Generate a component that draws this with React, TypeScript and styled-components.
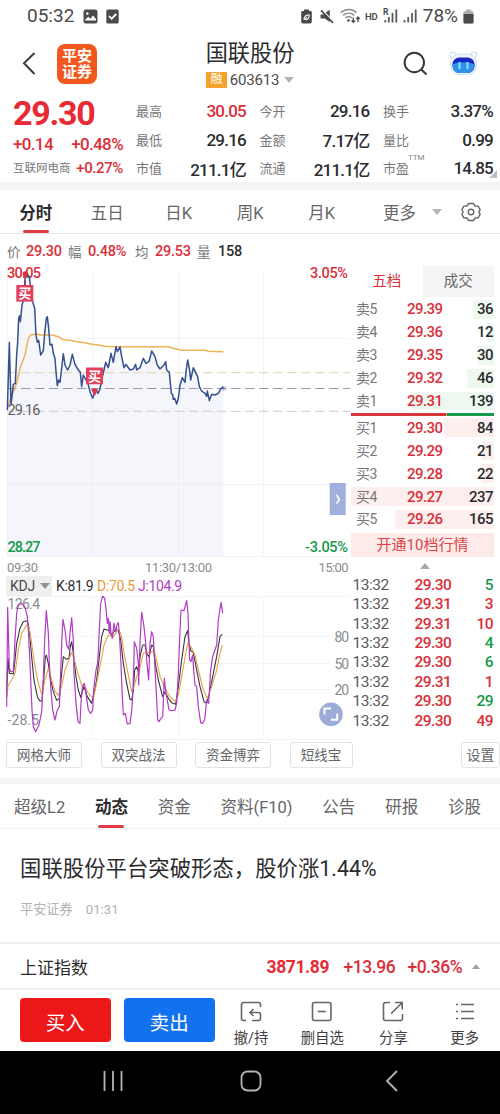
import React from "react";
import styled, { createGlobalStyle } from "styled-components";

const RED = "#d9303a";
const GREEN = "#149a4b";
const INK = "#2c2c2f";
const GREY = "#77777a";

const GlobalStyle = createGlobalStyle`
  * { box-sizing: border-box; }
  body {
    margin: 0;
    background: #fff;
    color: ${INK};
    font-family: Roboto, "Noto Sans CJK SC", sans-serif;
    -webkit-font-smoothing: antialiased;
  }
`;

const Page = styled.main`
  width: 500px;
  height: 1114px;
  overflow: hidden;
  display: flex;
  flex-direction: column;
  background: #fff;
`;

/* ---------- status bar ---------- */

const StatusBar = styled.div`
  height: 32px;
  flex: none;
  display: flex;
  align-items: center;
  padding-left: 27px;
  color: #4a4a4a;
`;
const StatusText = styled.span<{ $w: number }>`
  width: ${(p) => p.$w}px;
  font-size: 19px;
  line-height: 32px;
  white-space: nowrap;
`;
const StatusIcon = styled.svg<{ $gap: number }>`
  flex: none;
  margin-left: ${(p) => p.$gap}px;
`;
const Hd = styled.span`
  width: 13px;
  margin-left: 4px;
  font-size: 9.5px;
  font-weight: 600;
  letter-spacing: -0.2px;
`;

/* ---------- header ---------- */

const Header = styled.header`
  height: 63px;
  flex: none;
  display: grid;
  grid-template-columns: 57px 120px 146px 79px 47px 1fr;
  align-items: center;
`;
const BackIcon = styled.svg`
  margin-left: 22px;
`;
const Brand = styled.div`
  width: 40px;
  height: 40px;
  border-radius: 8px;
  background: #f2571d;
  color: #fff;
  font-size: 15px;
  font-weight: 700;
  line-height: 16px;
  text-align: center;
  padding-top: 4px;
`;
const TitleBlock = styled.div`
  display: flex;
  flex-direction: column;
  align-items: center;
  padding-top: 2px;
`;
const Title = styled.h1`
  margin: 0;
  font-size: 22.2px;
  font-weight: 400;
  line-height: 30px;
  height: 31px;
`;
const Code = styled.div`
  display: flex;
  align-items: center;
  font-size: 15px;
  line-height: 18px;
  height: 22px;
  letter-spacing: -0.2px;
  color: #4c4c50;
`;
const MarginTag = styled.span`
  width: 21px;
  height: 16px;
  margin-right: 3px;
  background: #f5a32c;
  color: #fff;
  font-size: 12px;
  line-height: 15px;
  text-align: center;
`;
const Caret = styled.i<{ $up?: boolean; $size?: number; $ml?: number; $color?: string }>`
  width: 0;
  height: 0;
  flex: none;
  margin-left: ${(p) => p.$ml ?? 0}px;
  border-left: ${(p) => p.$size ?? 5}px solid transparent;
  border-right: ${(p) => p.$size ?? 5}px solid transparent;
  border-${(p) => (p.$up ? "bottom" : "top")}: ${(p) => (p.$size ?? 5) + 1}px solid ${(p) => p.$color ?? "#b4b4b6"};
`;

/* ---------- quote ---------- */

const Quote = styled.section`
  height: 87px;
  flex: none;
  display: flex;
  padding: 1px 0 0 13px;
`;
const QuoteMain = styled.div`
  width: 123px;
  color: ${RED};
`;
const BigPrice = styled.div`
  font-size: 34px;
  font-weight: 700;
  line-height: 34px;
  height: 34px;
  letter-spacing: -1.3px;
  color: #e72a33;
`;
const ChangeLine = styled.div`
  display: flex;
  justify-content: space-between;
  width: 110px;
  height: 27px;
  font-size: 17px;
  line-height: 28px;
  font-weight: 500;
  letter-spacing: -0.65px;
`;
const SectorLine = styled.div`
  display: flex;
  justify-content: space-between;
  width: 110px;
  height: 23px;
  line-height: 23px;
  font-size: 15px;
  font-weight: 500;
  letter-spacing: -0.4px;
`;
const Sector = styled.span`
  font-size: 11.5px;
  font-weight: 400;
  letter-spacing: 0;
  color: ${GREY};
`;
const StatGrid = styled.div`
  display: grid;
  grid-template-columns: repeat(3, 110px);
  grid-template-rows: 29px 29px 28px;
  column-gap: 13.5px;
`;
const Stat = styled.div`
  position: relative;
  display: flex;
  justify-content: space-between;
  align-items: center;
`;
const StatLabel = styled.span`
  font-size: 13px;
  padding-bottom: 1px;
  color: ${GREY};
`;
const StatValue = styled.span<{ $red?: boolean }>`
  font-size: 17px;
  font-weight: 500;
  letter-spacing: -0.75px;
  color: ${(p) => (p.$red ? RED : INK)};
`;
const Ttm = styled.sup`
  position: absolute;
  left: 25px;
  top: -1px;
  font-size: 8px;
  line-height: 10px;
  color: #88888b;
`;
const Corner = styled.i`
  position: absolute;
  right: -4px;
  bottom: 4px;
  border-left: 8px solid transparent;
  border-bottom: 8px solid #bdbdbf;
`;
const Band = styled.div<{ $h: number }>`
  height: ${(p) => p.$h}px;
  flex: none;
  background: #f3f3f4;
`;

/* ---------- period tabs ---------- */

const PeriodTabs = styled.nav`
  height: 44px;
  flex: none;
  display: flex;
  border-bottom: 1px solid #e6e6e8;
`;
const Tab = styled.div<{ $active?: boolean; $w?: number }>`
  position: relative;
  ${(p) => (p.$w ? `width: ${p.$w}px;` : "")}
  flex: none;
  display: flex;
  align-items: center;
  justify-content: center;
  font-size: 16.5px;
  white-space: nowrap;
  font-weight: ${(p) => (p.$active ? 700 : 400)};
  color: ${(p) => (p.$active ? INK : "#66666a")};
  &::after {
    content: "";
    display: ${(p) => (p.$active ? "block" : "none")};
    position: absolute;
    left: calc(50% - 13px);
    bottom: 0;
    width: 26px;
    height: 3.5px;
    border-radius: 2px;
    background: #e33b45;
  }
`;
const GearIcon = styled.svg`
  align-self: center;
  margin-left: -6.5px;
`;

const InfoLine = styled.div`
  height: 32px;
  flex: none;
  display: grid;
  grid-template-columns: 19px 42px 20px 47px 20px 42px 21px 40px;
  align-items: center;
  padding: 2px 0 0 7px;
`;
const InfoLabel = styled.span`
  font-size: 13.5px;
  padding-bottom: 1px;
  color: ${GREY};
`;
const InfoValue = styled.span<{ $dark?: boolean }>`
  font-size: 14.5px;
  font-weight: 500;
  letter-spacing: -0.25px;
  color: ${(p) => (p.$dark ? INK : RED)};
`;

/* ---------- charts and order book ---------- */

const Board = styled.section`
  height: 476px;
  flex: none;
  display: flex;
`;
const ChartColumn = styled.div`
  width: 350px;
  flex: none;
  display: flex;
  flex-direction: column;
`;
const Chart = styled.svg`
  display: block;
  flex: none;
  font-family: Roboto, "Noto Sans CJK SC", sans-serif;
`;
const IndicatorBar = styled.div`
  height: 20px;
  flex: none;
  display: flex;
  align-items: center;
  padding-left: 6px;
  font-size: 14px;
  letter-spacing: -0.35px;
  white-space: nowrap;
`;
const IndicatorPick = styled.div`
  width: 46px;
  height: 20px;
  margin-right: 4px;
  display: flex;
  align-items: center;
  padding-left: 4px;
  background: #efeff0;
  letter-spacing: -0.2px;
  color: #4a4a4e;
`;
const Reading = styled.span<{ $color: string; $w: number }>`
  width: ${(p) => p.$w}px;
  color: ${(p) => p.$color};
`;

const BookColumn = styled.div`
  width: 143px;
  margin-left: 1px;
  display: flex;
  flex-direction: column;
`;
const BookTabs = styled.div`
  display: flex;
  height: 31px;
  margin-bottom: 1px;
`;
const BookTab = styled.div<{ $active?: boolean }>`
  flex: 1;
  font-size: 14.5px;
  line-height: 32px;
  text-align: center;
  color: ${(p) => (p.$active ? RED : "#66666a")};
  background: ${(p) => (p.$active ? "#fff" : "#f5f5f6")};
`;
const BookRow = styled.div`
  position: relative;
  height: 22.9px;
  display: grid;
  grid-template-columns: 51px 37px 1fr;
  align-items: center;
  padding: 0 1px 0 5px;
  font-weight: 500;
  font-size: 15px;
  letter-spacing: -0.55px;
`;
const DepthBar = styled.i<{ $sell: boolean }>`
  position: absolute;
  right: 0;
  top: 2px;
  bottom: 2px;
  background: ${(p) => (p.$sell ? "#edf8ef" : "#fdefed")};
`;
const Level = styled.span`
  position: relative;
  padding-bottom: 2px;
  font-size: 14px;
  font-weight: 400;
  letter-spacing: -0.4px;
  color: ${GREY};
`;
const Price = styled.span`
  position: relative;
  color: ${RED};
`;
const Volume = styled.span<{ $color?: string }>`
  position: relative;
  text-align: right;
  color: ${(p) => p.$color ?? INK};
`;
const Balance = styled.div`
  height: 3px;
  margin: 0.5px 0 0.5px;
  display: flex;
  background: ${GREEN};
  &::before {
    content: "";
    width: 95px;
    background: #d8383c;
    border-right: 1px solid #f0a03a;
  }
`;
const UpgradeBanner = styled.div`
  height: 24px;
  margin-top: 2px;
  background: #fdebea;
  color: #dc4347;
  font-size: 15px;
  line-height: 24px;
  text-align: center;
`;
const Collapse = styled.div`
  height: 18px;
  padding: 6px 0 0 4px;
  display: flex;
  justify-content: center;
`;
const TradeRow = styled.div`
  height: 19.45px;
  display: grid;
  grid-template-columns: 62px 40px 1fr;
  align-items: center;
  padding: 0 1px 0 1.5px;
  font-size: 15.5px;
  font-weight: 500;
  letter-spacing: -0.55px;
`;
const Time = styled.span`
  color: #58585c;
  font-weight: 400;
  letter-spacing: -0.45px;
`;

/* ---------- lower part ---------- */

const ToolRow = styled.div`
  height: 36px;
  flex: none;
  display: flex;
  gap: 18.5px;
  padding-left: 6px;
`;
const Tool = styled.div<{ $w: number; $last?: boolean }>`
  width: ${(p) => p.$w}px;
  height: 26px;
  flex: none;
  ${(p) => (p.$last ? "margin-left: auto;" : "")}
  border: 1px solid #e3e3e5;
  border-radius: 3px;
  font-size: ${(p) => (p.$last ? 14 : 13.5)}px;
  line-height: 25px;
  text-align: center;
  white-space: nowrap;
  color: #66666a;
`;
const ContentTabs = styled.nav`
  height: 45px;
  flex: none;
  display: flex;
  justify-content: space-between;
  padding: 0 19px 0 14px;
  border-bottom: 1px solid #f4f4f5;
`;
const News = styled.article`
  height: 113px;
  flex: none;
  padding: 23px 20px 0;
`;
const NewsTitle = styled.h2`
  margin: 0;
  font-size: 21.3px;
  font-weight: 400;
  line-height: 34px;
  letter-spacing: 0.08px;
  white-space: nowrap;
`;
const NewsMeta = styled.div`
  display: flex;
  gap: 13px;
  margin-top: 14px;
  font-size: 13.2px;
  line-height: 20px;
  color: #b2b2b5;
`;
const IndexBar = styled.div`
  height: 48px;
  flex: none;
  display: flex;
  align-items: center;
  padding: 0 19px 0 20px;
  border-top: 2px solid #efeff0;
  border-bottom: 2px solid #efeff0;
  font-size: 17px;
  color: ${RED};
`;
const IndexName = styled.span`
  width: 246.5px;
  color: ${INK};
`;
const IndexFigure = styled.span<{ $w: number; $bold?: boolean }>`
  width: ${(p) => p.$w}px;
  padding-top: 1px;
  font-size: 17.5px;
  font-weight: ${(p) => (p.$bold ? 700 : 500)};
  letter-spacing: ${(p) => (p.$bold ? -0.4 : -0.45)}px;
  color: ${(p) => (p.$bold ? "#e72a33" : RED)};
`;
const ActionBar = styled.div`
  height: 61px;
  flex: none;
  display: flex;
  padding: 8px 0 0 19.5px;
`;
const TradeButton = styled.button<{ $color: string }>`
  width: 91.5px;
  height: 44px;
  flex: none;
  margin-right: 12.5px;
  padding: 2px 0 0;
  border: 0;
  border-radius: 4px;
  background: ${(p) => p.$color};
  color: #fff;
  font-family: inherit;
  font-size: 19.5px;
`;
const Actions = styled.div`
  flex: 1;
  display: grid;
  grid-template-columns: repeat(4, 71.2px);
  margin-left: -12px;
`;
const Action = styled.div`
  display: flex;
  flex-direction: column;
  align-items: center;
  padding-top: 2.5px;
  font-size: 14.4px;
  line-height: 20px;
  color: #3f3f43;
  svg { margin-bottom: 7px; }
`;
const NavBar = styled.div`
  height: 63px;
  flex: none;
  display: grid;
  grid-template-columns: 1fr 56px 1fr;
  align-items: center;
  justify-items: center;
  padding: 0 0 3px 2px;
  background: #000;
`;
const NavBack = styled.svg`
  margin-left: 4px;
`;

/* ---------- data ---------- */

const stats: { label: string; value: string; red?: boolean; ttm?: boolean }[] = [
  { label: "最高", value: "30.05", red: true },
  { label: "今开", value: "29.16" },
  { label: "换手", value: "3.37%" },
  { label: "最低", value: "29.16" },
  { label: "金额", value: "7.17亿" },
  { label: "量比", value: "0.99" },
  { label: "市值", value: "211.1亿" },
  { label: "流通", value: "211.1亿" },
  { label: "市盈", value: "14.85", ttm: true },
];

const asks: [string, string, string, number][] = [
  ["卖5", "29.39", "36", 21],
  ["卖4", "29.36", "12", 7],
  ["卖3", "29.35", "30", 17],
  ["卖2", "29.32", "46", 27],
  ["卖1", "29.31", "139", 84],
];
const bids: [string, string, string, number][] = [
  ["买1", "29.30", "84", 50],
  ["买2", "29.29", "21", 12],
  ["买3", "29.28", "22", 13],
  ["买4", "29.27", "237", 143],
  ["买5", "29.26", "165", 99],
];
const trades: [string, string, boolean][] = [
  ["29.30", "5", false],
  ["29.31", "3", true],
  ["29.31", "10", true],
  ["29.30", "4", false],
  ["29.30", "6", false],
  ["29.31", "1", true],
  ["29.30", "29", false],
  ["29.30", "49", true],
];

const pricePts =
  "22,465 28,262 33,450 40,388 46,385 50,300 53,262 56,190 59,182 61,200 66,150 72,130 74,85 76,60 80,66 84,60 88,66 92,100 98,140 104,160 108,240 112,262 116,256 122,300 130,287 134,235 139,190 142,185 146,220 150,270 156,268 160,295 165,310 168,350 172,392 176,375 180,382 185,340 190,296 195,330 203,345 210,330 217,298 225,328 235,345 241,352 245,395 250,360 258,375 264,385 270,410 278,430 284,412 290,408 294,415 300,402 306,370 312,345 317,322 325,338 333,295 340,322 348,275 352,290 360,276 366,310 372,338 378,328 390,345 400,342 407,328 410,345 420,338 430,310 438,325 447,320 455,288 465,305 472,330 480,342 492,330 497,320 500,345 508,352 514,415 518,418 520,433 524,430 530,447 535,430 540,390 547,368 555,382 558,350 563,315 568,340 572,375 580,338 588,355 593,365 598,395 605,408 615,415 620,424 622,408 628,437 635,418 645,420 655,415 662,402 668,396 670,402";
const avgPts =
  "24,452 34,425 50,385 60,340 75,300 85,250 92,240 110,237 122,241 135,239 160,241 175,245 188,254 210,256 230,260 255,263 275,268 300,271 315,274 345,275 505,275 520,280 533,283 545,286 615,286 625,289 670,290";
const jPts =
  "20,530 23,232 28,415 33,425 40,425 45,330 50,250 55,225 65,220 75,232 82,260 85,300 90,400 96,540 100,590 107,605 117,585 125,545 130,440 134,330 139,242 145,310 148,400 152,470 158,540 165,570 172,540 178,530 183,400 186,320 189,268 195,300 200,345 206,358 210,310 215,263 220,330 222,430 228,520 234,575 240,580 243,520 247,470 253,460 257,485 265,540 272,550 278,540 281,480 288,420 293,400 298,300 302,220 308,197 314,205 318,235 322,280 325,265 328,310 330,275 333,310 337,325 342,280 347,305 351,285 355,278 358,310 362,380 366,480 370,555 376,550 382,582 390,580 395,545 398,500 401,420 403,335 410,355 415,400 416,465 420,340 425,247 432,290 437,340 441,400 446,450 450,340 455,305 460,320 463,380 468,470 473,570 477,575 483,565 488,560 493,445 497,485 502,510 507,540 515,542 525,540 530,520 535,430 538,350 543,240 552,242 560,212 564,250 566,310 569,390 573,395 578,375 581,420 585,465 590,470 595,530 602,578 607,580 614,570 620,510 626,520 632,420 638,380 645,360 650,345 655,270 663,217 668,250";
const kPts =
  "20,500 24,385 28,430 40,432 45,390 50,340 60,295 70,275 82,272 88,300 94,370 102,450 112,500 120,514 126,512 131,450 136,380 139,375 145,400 150,440 160,485 170,511 178,505 184,440 190,380 200,388 207,385 211,350 215,335 220,370 228,440 235,480 242,502 247,485 252,470 262,500 275,520 282,490 290,450 298,380 305,320 312,297 320,300 325,300 335,315 345,300 355,300 362,330 370,400 380,460 390,508 395,510 400,480 404,420 410,410 416,430 420,380 428,345 435,345 440,370 447,380 455,345 460,350 466,400 475,450 488,500 495,485 505,505 515,518 527,523 535,470 545,390 555,320 563,302 567,340 572,362 580,368 590,420 600,470 612,515 620,520 628,490 640,430 650,380 660,320 667,313";
const dPts =
  "20,500 25,465 35,450 45,430 55,360 65,310 80,285 87,290 95,340 105,410 115,460 125,492 135,450 145,415 155,450 165,485 175,495 185,470 195,420 205,395 214,368 222,385 232,425 245,465 255,470 265,490 280,505 292,450 302,400 312,345 325,315 340,320 350,305 357,300 365,320 372,370 382,420 395,485 402,470 410,440 418,420 430,370 440,365 450,370 462,360 470,390 480,440 495,475 510,500 525,515 535,495 545,440 557,370 565,335 575,355 585,375 595,420 610,480 622,505 635,470 650,420 660,370 667,345";

/* ---------- parts ---------- */

function PriceChart() {
  return (
    <Chart width="350" height="310" viewBox="0 266 350 310">
      <g stroke="#f3f3f6" fill="none">
        <path d="M7.5 270V556M92.5 270V556M178.5 270V556M263.5 270V556M7 338.5H349M7 484.5H349M7 556.5H349" />
      </g>
      <g transform="translate(0 255) scale(0.33333)">
        <polygon points={`${pricePts} 670,903 22,903`} fill="#e9ebf6" fillOpacity="0.45" />
      </g>
      <g strokeDasharray="9.5 4.5" fill="none">
        <path d="M7 372.7H350" stroke="#ddd5b4" />
        <path d="M7 388.5H350" stroke="#9a9ba8" />
        <path d="M7 411.3H350" stroke="#cfcdc6" />
      </g>
      <text x="7" y="278" fontSize="14.5" fontWeight="500" fill={RED} textLength="34">30.05</text>
      <text x="310" y="278" fontSize="14.5" fontWeight="500" fill={RED} textLength="38">3.05%</text>
      <g transform="translate(0 255) scale(0.33333)" fill="none" strokeLinejoin="round">
        <polyline points={avgPts} stroke="#eeb356" strokeWidth="4.5" />
        <polyline points={pricePts} stroke="#34508f" strokeWidth="4.5" />
      </g>
      <circle cx="25.5" cy="274" r="2.8" fill={RED} />
      <circle cx="224" cy="388.5" r="2.5" fill="#7385b5" fillOpacity="0.35" />
      <path d="M25.5 274V286" stroke="#d93a55" />
      <rect x="16.3" y="285" width="17" height="16.6" fill="#e2405c" />
      <text x="18.3" y="298" fontSize="13" fontWeight="700" fill="#fff">买</text>
      <rect x="86" y="367.5" width="17" height="16.8" fill="#e2405c" />
      <text x="88" y="380.5" fontSize="13" fontWeight="700" fill="#fff">买</text>
      <path d="M91 389.5L94.5 388L98 389.5L94.8 396Z" fill="#d93a55" />
      <text x="7.5" y="415" fontSize="14.5" fill="#606064" textLength="33">29.16</text>
      <text x="7.5" y="552" fontSize="14.5" fontWeight="500" fill={GREEN} textLength="33">28.27</text>
      <text x="305" y="552" fontSize="14.5" fontWeight="500" fill={GREEN} textLength="43">-3.05%</text>
      <rect x="329.7" y="483" width="16" height="32" fill="#a0b0dd" />
      <path d="M336.5 495l2.8 4.3l-2.8 4.3" stroke="#fff" strokeWidth="1.7" fill="none" />
      <g fontSize="13" fill="#8c8c8f">
        <text x="7" y="571.500" textLength="31">09:30</text>
        <text x="145" y="571.500" textLength="67">11:30/13:00</text>
        <text x="318.5" y="571.500" textLength="30">15:00</text>
      </g>
    </Chart>
  );
}

function KdjChart() {
  return (
    <Chart width="350" height="146" viewBox="0 596 350 146">
      <path d="M7 596.5H349M7 636.5H330M7 663.5H330M7 689.5H330M7 739.5H349M92.5 596V740M178.5 596V740M263.5 596V740" stroke="#f5f5f7" fill="none" />
      <g fontSize="14" fill="#8c8c8f">
        <text x="7.5" y="608.5" textLength="32.5">126.4</text>
        <text x="7.5" y="725" textLength="31.5">-28.5</text>
        <text x="334.5" y="641.5" textLength="14.5">80</text>
        <text x="334.5" y="668.5" textLength="14.5">50</text>
        <text x="334.5" y="695" textLength="14.5">20</text>
      </g>
      <g transform="translate(0 530) scale(0.33333)" fill="none" strokeLinejoin="round">
        <polyline points={kPts} stroke="#34343c" strokeWidth="3.3" />
        <polyline points={dPts} stroke="#e5a04a" strokeWidth="3.3" />
        <polyline points={jPts} stroke="#b23cc4" strokeWidth="3.6" />
      </g>
      <circle cx="331" cy="714.3" r="11.8" fill="#9dabd8" />
      <path d="M324.5 714.5V708.5H331M331 719.8H337.2V713.5" stroke="#fff" strokeWidth="1.9" fill="none" />
    </Chart>
  );
}

function Book({ rows, sell }: { rows: [string, string, string, number][]; sell: boolean }) {
  return (
    <>
      {rows.map(([level, price, volume, depth]) => (
        <BookRow key={level}>
          <DepthBar $sell={sell} style={{ width: depth }} />
          <Level>{level}</Level>
          <Price>{price}</Price>
          <Volume>{volume}</Volume>
        </BookRow>
      ))}
    </>
  );
}

function StatusIcons() {
  return (
    <>
      <StatusIcon $gap={8} width="15" height="15" viewBox="0 0 15 15">
        <rect x="0.5" y="0.5" width="14" height="14" rx="2.5" fill="#4a4a4a" />
        <circle cx="4.3" cy="4.6" r="1.3" fill="#fff" />
        <path d="M2 11l3.2-3.2 2.2 2 2.6-3.2L13 10v1.5H2z" fill="#fff" />
      </StatusIcon>
      <StatusIcon $gap={7.5} width="13" height="15" viewBox="0 0 13 15">
        <rect x="0.3" y="0.5" width="12.4" height="14" rx="1.5" fill="#4a4a4a" />
        <path d="M3 7l2.6 2.7L10.3 5" stroke="#fff" strokeWidth="1.8" fill="none" />
      </StatusIcon>
      <StatusIcon $gap={182} width="11" height="15" viewBox="0 0 11 15">
        <path d="M3 0.5h5v1.5h1.5a1.3 1.3 0 0 1 1.3 1.3v9.5a1.7 1.7 0 0 1-1.7 1.7H1.9a1.7 1.7 0 0 1-1.7-1.7V3.3A1.3 1.3 0 0 1 1.5 2H3z" fill="#4a4a4a" />
        <path d="M3 10.8C2.8 7.5 4.8 5.8 8.2 6c0 3.6-1.8 5.3-4.3 4.2L6 8" stroke="#fff" strokeWidth="1.1" fill="none" />
      </StatusIcon>
      <StatusIcon $gap={8} width="14" height="15" viewBox="0 0 14 15">
        <path d="M0.5 5.500H3.500L7.500 2.200 9.800 1v12L4.800 9.500H0.500z" fill="#4a4a4a" />
        <path d="M2 0.500L14 13.300" stroke="#fff" strokeWidth="1.200" />
        <path d="M1 1.300L13 13.800" stroke="#4a4a4a" strokeWidth="1.700" />
      </StatusIcon>
      <StatusIcon $gap={6.5} width="21" height="16" viewBox="0 0 21 16" fill="none" stroke="#8d8d8d" strokeWidth="1.5">
        <path d="M0.8 4.6C5.5 0.3 12 0.3 16.500 4.600M3.200 7.400c3.300-2.900 7.700-2.900 11 0M5.500 10c2-1.700 4.400-1.700 6.400 0" />
        <circle cx="8.500" cy="12.500" r="1.300" fill="#4a4a4a" stroke="none" />
        <path d="M13.300 9.500V14M11.600 12.500l1.700 1.900 1.700-1.900M18 14V9.200M16.300 11L18 9l1.700 2" stroke="#4a4a4a" strokeWidth="1.3" />
      </StatusIcon>
      <Hd>HD</Hd>
      <StatusIcon $gap={5} width="15" height="16" viewBox="0 0 15 16">
        <text x="0" y="7" fontSize="8.5" fontWeight="700" fill="#4a4a4a">R</text>
        <path d="M2.300 12V14.500M5.800 9V14.500M9.500 5V14.500M13.300 1.500V14.500" stroke="#5a5a5a" strokeWidth="1.8" />
      </StatusIcon>
      <StatusIcon $gap={5} width="15" height="16" viewBox="0 0 15 16">
        <path d="M1.500 12V14.500M5.200 9V14.500M9 5V14.500M12.700 1.500V14.500" stroke="#5a5a5a" strokeWidth="1.8" />
      </StatusIcon>
      <StatusText $w={38}>&nbsp;78%</StatusText>
      <StatusIcon $gap={7} width="11" height="15" viewBox="0 0 11 15">
        <path d="M3.200 0.500h4.600v1.500H3.200z" fill="#aaa" />
        <rect x="0.5" y="2" width="10" height="12.5" rx="1.5" fill="#b0b0b0" />
        <path d="M0.500 5h10v8a1.500 1.500 0 0 1-1.500 1.500H2A1.500 1.500 0 0 1 0.500 13z" fill="#4a4a4a" />
      </StatusIcon>
    </>
  );
}

const SearchIcon = styled.svg`
  grid-column: 5;
  margin-left: 1px;
`;

export default function App() {
  return (
    <Page>
      <GlobalStyle />
      <StatusBar>
        <StatusText $w={48}>05:32</StatusText>
        <StatusIcons />
      </StatusBar>

      <Header>
        <BackIcon width="15" height="25" viewBox="0 0 15 25">
          <path d="M12.5 2L2 12.3 12.5 23" stroke="#3c3c40" strokeWidth="2" fill="none" />
        </BackIcon>
        <Brand>平安<br />证券</Brand>
        <TitleBlock>
          <Title>国联股份</Title>
          <Code>
            <MarginTag>融</MarginTag>603613
            <Caret $ml={5} />
          </Code>
        </TitleBlock>
        <SearchIcon width="26" height="26" viewBox="0 0 26 26" fill="none" stroke="#37373b" strokeWidth="2">
          <circle cx="11.300" cy="11.500" r="9.700" />
          <path d="M18 18.200L23.500 23.500" />
        </SearchIcon>
        <svg width="30" height="26" viewBox="0 0 30 26">
          <circle cx="3.800" cy="4" r="3" fill="#fff" stroke="#cbd6ee" />
          <circle cx="24.800" cy="4" r="3" fill="#fff" stroke="#cbd6ee" />
          <rect x="1.500" y="3" width="26" height="20.500" rx="9" fill="#edf3ff" stroke="#d4e0f7" />
          <rect x="3.500" y="6.500" width="22" height="15.500" rx="7" fill="#1527c7" />
          <path d="M3.500 13.500c5-3 17-3 22 0v1.500a7 7 0 0 1-7 7h-8a7 7 0 0 1-7-7z" fill="#3291ec" />
          <path d="M10.500 12v5M18.500 12v5" stroke="#7fd9ff" strokeWidth="2.400" strokeLinecap="round" />
        </svg>
      </Header>

      <Quote>
        <QuoteMain>
          <BigPrice>29.30</BigPrice>
          <ChangeLine><span>+0.14</span><span>+0.48%</span></ChangeLine>
          <SectorLine><Sector>互联网电商</Sector><span>+0.27%</span></SectorLine>
        </QuoteMain>
        <StatGrid>
          {stats.map((s) => (
            <Stat key={s.label}>
              <StatLabel>{s.label}</StatLabel>
              {s.ttm && <Ttm>TTM</Ttm>}
              {s.ttm && <Corner />}
              <StatValue $red={s.red}>{s.value}</StatValue>
            </Stat>
          ))}
        </StatGrid>
      </Quote>
      <Band $h={8} />

      <PeriodTabs>
        <Tab $active $w={71.5}>分时</Tab>
        <Tab $w={71.5}>五日</Tab>
        <Tab $w={71.5}>日K</Tab>
        <Tab $w={71.5}>周K</Tab>
        <Tab $w={71.5}>月K</Tab>
        <Tab $w={110}>更多<Caret $ml={16} /></Tab>
        <GearIcon width="20" height="20" viewBox="0 0 20 20" fill="none" stroke="#66666a" strokeWidth="1.4">
          <path d="M7.6 1.5h4.8l1.7 2.5 3 .1 2 3.5-1.2 2.4 1.2 2.4-2 3.5-3 .1-1.7 2.5H7.600l-1.700-2.500-3-.1-2-3.500L2.100 10 .9 7.600l2-3.500 3-.1z" strokeLinejoin="round" />
          <circle cx="10" cy="10" r="2.8" />
        </GearIcon>
      </PeriodTabs>

      <InfoLine>
        <InfoLabel>价</InfoLabel><InfoValue>29.30</InfoValue>
        <InfoLabel>幅</InfoLabel><InfoValue>0.48%</InfoValue>
        <InfoLabel>均</InfoLabel><InfoValue>29.53</InfoValue>
        <InfoLabel>量</InfoLabel><InfoValue $dark>158</InfoValue>
      </InfoLine>

      <Board>
        <ChartColumn>
          <PriceChart />
          <IndicatorBar>
            <IndicatorPick>KDJ<Caret $ml={5} $color="#939396" /></IndicatorPick>
            <Reading $color={INK} $w={41}>K:81.9</Reading>
            <Reading $color="#e89a3c" $w={41}>D:70.5</Reading>
            <Reading $color="#b23cc4" $w={48}>J:104.9</Reading>
          </IndicatorBar>
          <KdjChart />
        </ChartColumn>
        <BookColumn>
          <BookTabs>
            <BookTab $active>五档</BookTab>
            <BookTab>成交</BookTab>
          </BookTabs>
          <Book rows={asks} sell />
          <Balance />
          <Book rows={bids} sell={false} />
          <UpgradeBanner>开通10档行情</UpgradeBanner>
          <Collapse><Caret $up $color="#aaaaad" /></Collapse>
          {trades.map(([price, volume, up], i) => (
            <TradeRow key={i}>
              <Time>13:32</Time>
              <Price>{price}</Price>
              <Volume $color={up ? RED : GREEN}>{volume}</Volume>
            </TradeRow>
          ))}
        </BookColumn>
      </Board>

      <ToolRow>
        <Tool $w={76}>网格大师</Tool>
        <Tool $w={76}>双突战法</Tool>
        <Tool $w={76}>资金博弈</Tool>
        <Tool $w={63}>短线宝</Tool>
        <Tool $w={39} $last>设置</Tool>
      </ToolRow>
      <Band $h={6} />

      <ContentTabs>
        <Tab>超级L2</Tab>
        <Tab $active>动态</Tab>
        <Tab>资金</Tab>
        <Tab>资料(F10)</Tab>
        <Tab>公告</Tab>
        <Tab>研报</Tab>
        <Tab>诊股</Tab>
      </ContentTabs>

      <News>
        <NewsTitle>国联股份平台突破形态，股价涨1.44%</NewsTitle>
        <NewsMeta><span>平安证券</span><span>01:31</span></NewsMeta>
      </News>

      <IndexBar>
        <IndexName>上证指数</IndexName>
        <IndexFigure $w={77} $bold>3871.89</IndexFigure>
        <IndexFigure $w={64}>+13.96</IndexFigure>
        <IndexFigure $w={60}>+0.36%</IndexFigure>
        <Caret $up $size={4} $ml={4} $color="#a0a0a3" />
      </IndexBar>

      <ActionBar>
        <TradeButton $color="#ec1719">买入</TradeButton>
        <TradeButton $color="#1171ef">卖出</TradeButton>
        <Actions>
          <Action>
            <svg width="22" height="21" viewBox="0 0 22 21" fill="none" stroke="#66666a" strokeWidth="1.6">
              <path d="M6 19.5H3.5a2 2 0 0 1-2-2v-14a2 2 0 0 1 2-2h15a2 2 0 0 1 2 2V6M13.5 8l-3.5 3.5 3.5 3.5M10 11.5h8.500a2 2 0 0 1 2 2v4a2 2 0 0 1-2 2H12" />
            </svg>
            撤/持
          </Action>
          <Action>
            <svg width="22" height="21" viewBox="0 0 22 21" fill="none" stroke="#66666a" strokeWidth="1.6">
              <rect x="1.5" y="1.5" width="18.5" height="18" rx="2" />
              <path d="M6.7 10.5h8" />
            </svg>
            删自选
          </Action>
          <Action>
            <svg width="22" height="21" viewBox="0 0 22 21" fill="none" stroke="#66666a" strokeWidth="1.6">
              <path d="M8 1.5H3.5a2 2 0 0 0-2 2v14a2 2 0 0 0 2 2h15a2 2 0 0 0 2-2V13M13 1.5h7.2v7M20 1.7L9 12.8" />
            </svg>
            分享
          </Action>
          <Action>
            <svg width="22" height="21" viewBox="0 0 22 21" fill="none" stroke="#66666a" strokeWidth="1.7">
              <path d="M2 3.5h2M7 3.5h13M2 10.5h2M7 10.5h13M2 17.5h2M7 17.5h13" />
            </svg>
            更多
          </Action>
        </Actions>
      </ActionBar>

      <NavBar>
        <svg width="20" height="22" viewBox="0 0 20 22" stroke="#b4b4b4" strokeWidth="1.8">
          <path d="M1.500 1v20M10 1v20M18.500 1v20" />
        </svg>
        <svg width="22" height="22" viewBox="0 0 22 22">
          <rect x="1.5" y="1.5" width="19" height="19" rx="6" fill="none" stroke="#b4b4b4" strokeWidth="1.8" />
        </svg>
        <NavBack width="14" height="22" viewBox="0 0 14 22">
          <path d="M12 1L2 11l10 10" fill="none" stroke="#b4b4b4" strokeWidth="1.8" />
        </NavBack>
      </NavBar>
    </Page>
  );
}
